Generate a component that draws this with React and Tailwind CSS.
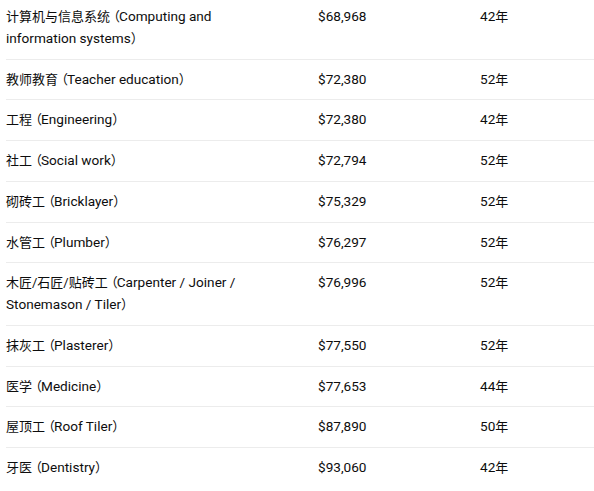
const rows = [
  ["计算机与信息系统（Computing and information systems）", "$68,968", "42年"],
  ["教师教育（Teacher education）", "$72,380", "52年"],
  ["工程（Engineering）", "$72,380", "42年"],
  ["社工（Social work）", "$72,794", "52年"],
  ["砌砖工（Bricklayer）", "$75,329", "52年"],
  ["水管工（Plumber）", "$76,297", "52年"],
  ["木匠/石匠/贴砖工（Carpenter / Joiner / Stonemason / Tiler）", "$76,996", "52年"],
  ["抹灰工（Plasterer）", "$77,550", "52年"],
  ["医学（Medicine）", "$77,653", "44年"],
  ["屋顶工（Roof Tiler）", "$87,890", "50年"],
  ["牙医（Dentistry）", "$93,060", "42年"],
];

const CJK = /[\u3000-\u9fff\uff00-\uffef]/;

function Mixed({ text }) {
  const parts = text
    .split(/([\u3000-\u9fff\uff00-\uffef][\u3000-\u9fff\uff00-\uffef/]*)/)
    .filter(Boolean);
  return parts.map((p, i) => {
    if (CJK.test(p[0])) {
      if (p.endsWith("（")) {
        const body = p.slice(0, -1);
        return (
          <span key={i} className="text-[13px]">
            {body}
            <span className="inline-block -ml-[3px] -mr-[1px]">（</span>
          </span>
        );
      }
      return (
        <span key={i} className="text-[13px]">
          {p}
        </span>
      );
    }
    return <span key={i}>{p}</span>;
  });
}

export default function App() {
  return (
    <div
      className="w-[594px] h-[491px] overflow-hidden bg-white text-[#0d0d0d] text-[13.6px] leading-[21.75px]"
      style={{ fontFamily: 'Roboto, "Noto Sans CJK SC", sans-serif' }}
    >
      <div className="ml-[6px] -mt-[3px]">
        {rows.map((r, i) => (
          <div
            key={i}
            className={`grid grid-cols-[312px_162px_1fr] py-[9px] ${i < rows.length - 1 ? "border-b border-[#ececec]" : ""}`}
          >
            <div className="pr-[40px]">
              <Mixed text={r[0]} />
            </div>
            <div>{r[1]}</div>
            <div>
              <Mixed text={r[2]} />
            </div>
          </div>
        ))}
      </div>
    </div>
  );
}
